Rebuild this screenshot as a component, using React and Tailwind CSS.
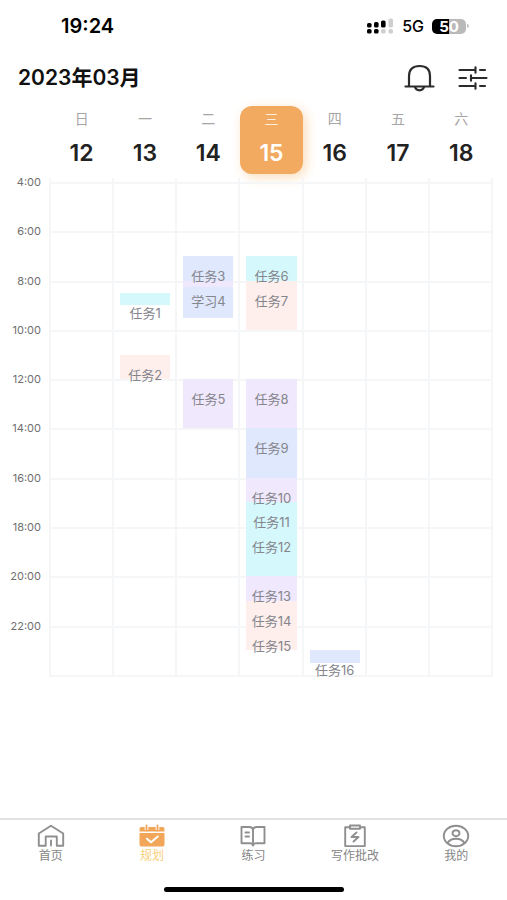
const LINE = "border-[#f4f6f7]";

const HOURS = ["4:00", "6:00", "8:00", "10:00", "12:00", "14:00", "16:00", "18:00", "20:00", "22:00"];

const BLUE = "bg-[#dfe8fd]";
const LILAC = "bg-[#f0e8fd]";
const CYAN = "bg-[#d5f8fc]";
const PINK = "bg-[#feefec]";

// Each calendar row is half an hour, counted from 4:00.
const DAYS = [
  { week: "日", date: 12, events: [] },
  {
    week: "一",
    date: 13,
    events: [
      { name: "任务1", color: CYAN, rows: "row-start-10 row-end-11" },
      { name: "任务2", color: PINK, rows: "row-start-15 row-end-17" },
    ],
  },
  {
    week: "二",
    date: 14,
    events: [
      { name: "任务3", color: BLUE, rows: "row-start-7 row-end-9" },
      { name: "学习4", color: BLUE, rows: "row-start-9 row-end-12", strip: true },
      { name: "任务5", color: LILAC, rows: "row-start-17 row-end-21" },
    ],
  },
  {
    week: "三",
    date: 15,
    active: true,
    events: [
      { name: "任务6", color: CYAN, rows: "row-start-7 row-end-9" },
      { name: "任务7", color: PINK, rows: "row-start-9 row-end-13" },
      { name: "任务8", color: LILAC, rows: "row-start-17 row-end-21" },
      { name: "任务9", color: BLUE, rows: "row-start-21 row-end-25" },
      { name: "任务10", color: LILAC, rows: "row-start-25 row-end-27" },
      { name: "任务11", color: CYAN, rows: "row-start-27 row-end-29" },
      { name: "任务12", color: CYAN, rows: "row-start-29 row-end-33" },
      { name: "任务13", color: LILAC, rows: "row-start-33 row-end-35" },
      { name: "任务14", color: PINK, rows: "row-start-35 row-end-37" },
      { name: "任务15", color: PINK, rows: "row-start-37 row-end-39" },
    ],
  },
  {
    week: "四",
    date: 16,
    events: [{ name: "任务16", color: BLUE, rows: "row-start-39 row-end-40" }],
  },
  { week: "五", date: 17, events: [] },
  { week: "六", date: 18, events: [] },
];

function StatusBar() {
  return (
    <div className="flex h-[50px] items-center justify-between pt-[2px] pr-[38px] pl-[61px] text-black">
      <span className="text-[20px] leading-6 font-semibold">19:24</span>
      <div className="flex items-center">
        <svg width="27" height="16" viewBox="0 0 27 16" aria-hidden="true">
          <g fill="#000">
            <rect x="0" y="5" width="4.600" height="4.600" rx="1.6" />
            <rect x="7" y="4" width="4.600" height="5.600" rx="1.6" />
            <rect x="14" y="2.500" width="4.600" height="7" rx="1.6" />
            <rect x="0" y="11" width="4.600" height="4.500" rx="1.6" />
            <rect x="7" y="11" width="4.600" height="4.500" rx="1.6" />
          </g>
          <g fill="#cfcfcf">
            <rect x="21.500" y="0.500" width="4.500" height="9" rx="1.6" />
            <rect x="14" y="11" width="4.600" height="4.500" rx="1.6" />
            <rect x="21.500" y="11" width="4.500" height="4.500" rx="1.6" />
          </g>
        </svg>
        <span className="ml-2 text-[16px] leading-5 font-medium">5G</span>
        <span className="ml-2 flex h-[15px] w-[34px] items-center justify-center rounded-[5px] bg-linear-to-r from-black from-50% to-[#b9b9b9] to-50% text-[15px] leading-none font-bold text-white">
          50
        </span>
        <span className="ml-px h-1 w-[2px] rounded-r-full bg-[#c4c4c4]" />
      </div>
    </div>
  );
}

function BellIcon() {
  return (
    <svg width="31" height="28" viewBox="0 0 31 28" fill="none" stroke="#2b2b2b" strokeWidth="2.200" strokeLinecap="round" aria-hidden="true">
      <path d="M5 22V12C5 5.500 9 2 15.500 2S26 5.500 26 12v10" />
      <path d="M1.500 22.500h28" />
      <path d="M11 23c.6 2.300 2.200 3.300 4.500 3.300S19.400 25.300 20 23" />
    </svg>
  );
}

function FilterIcon() {
  return (
    <svg width="30" height="24" viewBox="0 0 30 24" fill="none" stroke="#2b2b2b" strokeWidth="2.100" strokeLinecap="round" aria-hidden="true">
      <path d="M1.500 4h15M22 4h5M1.500 12h6.500M13 12h15.500M1.500 20h15M22 20h5" />
      <path d="M17.500 1.300v5.400M13 9.300v5.400M17.500 17.300v5.400" />
    </svg>
  );
}

function HomeIcon() {
  return (
    <svg width="28" height="24" viewBox="0 0 28 24" fill="none" stroke="#8f8f8f" strokeWidth="1.900" strokeLinejoin="round" strokeLinecap="round" aria-hidden="true">
      <path d="M1.800 9.500 14 1.800l12.200 7.700v12.300h-6.400v-9.300H8.700v9.300H1.800z" />
      <path d="M14 16.500v5" />
    </svg>
  );
}

function PlanIcon() {
  return (
    <svg width="28" height="24" viewBox="0 0 28 24" fill="none" aria-hidden="true">
      <path d="M3.500 3h21c1.200 0 2 .8 2 2v2.500h-25V5c0-1.200.8-2 2-2z" fill="#f2a65a" />
      <path d="M1.500 9h25v11.500c0 1.200-.8 2-2 2h-21c-1.200 0-2-.8-2-2z" fill="#f2a65a" />
      <path d="M8.500 2v4M19.500 2v4" stroke="#fff" strokeWidth="3.600" />
      <path d="M8.500 1.500v5M19.500 1.500v5" stroke="#f2a65a" strokeWidth="1.800" strokeLinecap="round" />
      <path d="m9 14.800 4 3.400 6.800-5.700" stroke="#fff" strokeWidth="2.100" strokeLinecap="round" strokeLinejoin="round" />
    </svg>
  );
}

function PracticeIcon() {
  return (
    <svg width="28" height="24" viewBox="0 0 28 24" fill="none" stroke="#8f8f8f" strokeWidth="1.900" strokeLinejoin="round" strokeLinecap="round" aria-hidden="true">
      <path d="M14 5.500C13.500 3.800 12.300 3 10.500 3h-8v16.300h8.500c1.800 0 2.700.7 3 2.200.3-1.500 1.200-2.200 3-2.200h8.500V3h-8c-1.800 0-3 .8-3.500 2.500z" />
      <path d="M14 5.500v15.500M6.500 8.500h3.500M6.500 12.500h3.500" />
    </svg>
  );
}

function WritingIcon() {
  return (
    <svg width="28" height="24" viewBox="0 0 28 24" fill="none" stroke="#8f8f8f" strokeWidth="1.900" strokeLinejoin="round" strokeLinecap="round" aria-hidden="true">
      <path d="M9 3.200H4.200v18.900h19.600V3.200H19" />
      <path d="M9 1.500h10v3.300H9z" />
      <path d="m15.500 8.500-5 4.500h7l-5 4.500" />
    </svg>
  );
}

function ProfileIcon() {
  return (
    <svg width="28" height="24" viewBox="0 0 28 24" fill="none" stroke="#8f8f8f" strokeWidth="1.900" strokeLinecap="round" aria-hidden="true">
      <ellipse cx="14" cy="12" rx="12.200" ry="10.200" />
      <ellipse cx="14" cy="9.200" rx="3.500" ry="3" />
      <path d="M5.500 19c1.600-3 4.700-4.300 8.500-4.300s6.900 1.300 8.500 4.300" />
    </svg>
  );
}

const TABS = [
  { label: "首页", Icon: HomeIcon },
  { label: "规划", Icon: PlanIcon, active: true },
  { label: "练习", Icon: PracticeIcon },
  { label: "写作批改", Icon: WritingIcon },
  { label: "我的", Icon: ProfileIcon },
];

function DayHeader({ day }) {
  return (
    <button
      type="button"
      className={`flex h-[68px] flex-col items-center gap-[10px] rounded-xl pt-[3px] ${
        day.active ? "bg-[#f2aa60] text-white shadow-[3px_3px_12px_#fbdcb8]" : "text-[#222222]"
      }`}
    >
      <span className={`text-[14px] leading-5 ${day.active ? "text-[#fdeedd]" : "text-[#a6a6a6]"}`}>{day.week}</span>
      <span className="text-[23px] leading-7 font-semibold">{day.date}</span>
    </button>
  );
}

function Event({ event }) {
  return (
    <div className={`flex flex-col items-center ${event.rows} ${event.color}`}>
      <div className={`h-[6px] w-full shrink-0 ${event.strip ? LILAC : ""}`} />
      <span className="z-10 shrink-0 pt-[6px] text-[13px] leading-4 whitespace-nowrap text-[#85858c]">{event.name}</span>
    </div>
  );
}

function DayColumn({ day }) {
  return (
    <div className={`grid border-l-2 pt-1 ${LINE}`}>
      <div className="col-start-1 row-start-1 grid h-[493px] grid-rows-10">
        {HOURS.map((hour) => (
          <div key={hour} className={`border-t-2 ${LINE}`} />
        ))}
      </div>
      <div className="col-start-1 row-start-1 mr-[5px] ml-[6px] grid h-[493px] grid-rows-[repeat(40,minmax(0,1fr))]">
        {day.events.map((event) => (
          <Event key={event.name} event={event} />
        ))}
      </div>
    </div>
  );
}

export default function App() {
  return (
    <div className="flex min-h-screen flex-col bg-white font-[Inter,'Noto_Sans_CJK_SC',sans-serif]">
      <StatusBar />

      <header className="flex h-14 items-center justify-between pr-[19px] pl-[18px]">
        <h1 className="text-[21px] leading-7 font-semibold text-[#111111]">2023年03月</h1>
        <div className="flex items-center gap-[23px]">
          <button type="button" aria-label="通知">
            <BellIcon />
          </button>
          <button type="button" aria-label="筛选">
            <FilterIcon />
          </button>
        </div>
      </header>

      <main className="pr-[14px]">
        <div className="grid grid-cols-7 pl-[50px]">
          {DAYS.map((day) => (
            <DayHeader key={day.date} day={day} />
          ))}
        </div>

        <div className="mt-1 flex items-start">
          <div className="-mt-1 grid h-[493px] w-[49px] grid-rows-10 pr-2 text-right text-[11px] leading-4 text-[#6f6f6f]">
            {HOURS.map((hour) => (
              <span key={hour}>{hour}</span>
            ))}
          </div>
          <div className={`grid flex-1 grid-cols-7 border-r-2 border-b-2 ${LINE}`}>
            {DAYS.map((day) => (
              <DayColumn key={day.date} day={day} />
            ))}
          </div>
        </div>
      </main>

      <footer className="mt-auto border-t-2 border-[#e2e2e2]">
        <nav className="grid h-[67px] grid-cols-5 items-start pt-1">
          {TABS.map(({ label, Icon, active }) => (
            <a key={label} href="#" className="flex flex-col items-center">
              <Icon />
              <span className={`text-[12px] leading-4 ${active ? "text-[#f8cf7c]" : "text-[#858585]"}`}>{label}</span>
            </a>
          ))}
        </nav>
        <div className="mx-auto mb-2 h-[5px] w-[180px] rounded-full bg-black" />
      </footer>
    </div>
  );
}
